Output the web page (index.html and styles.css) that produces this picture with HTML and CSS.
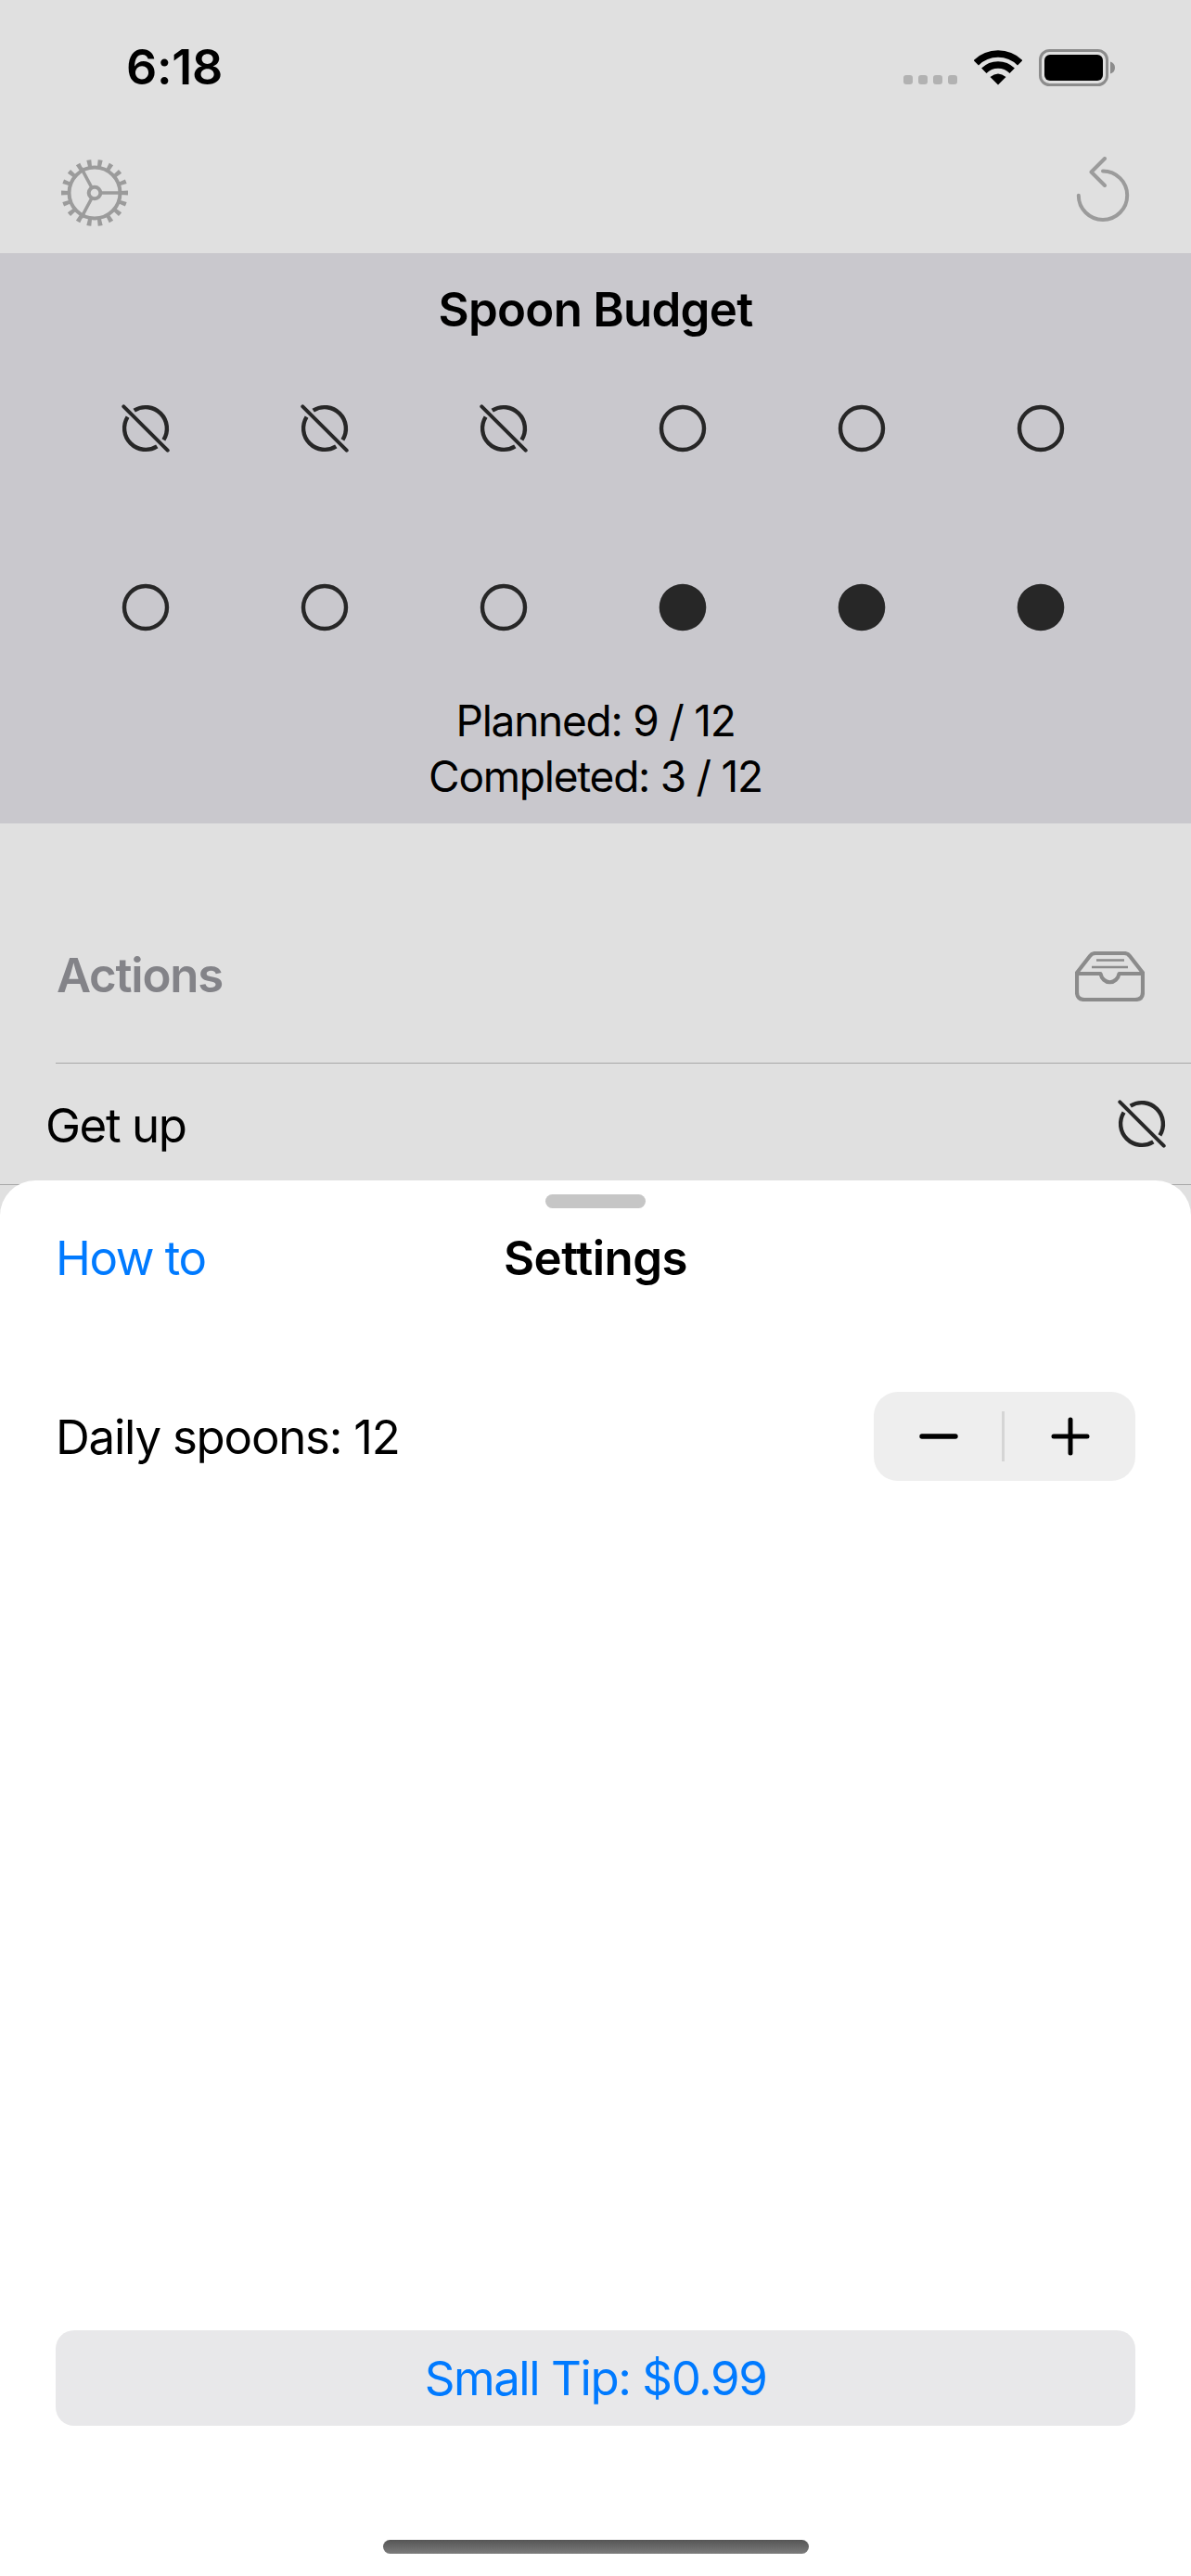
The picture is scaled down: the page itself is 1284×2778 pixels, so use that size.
FILE: index.html
```html
<!DOCTYPE html>
<html>
	<head>
		<title>Spoon Budget</title>
		<meta charset="UTF-8">
		<meta name="viewport" content="width=device-width, initial-scale=1.0">
		<link rel="stylesheet" href="styles.css">
	</head>
	<body>
		<svg class="defs" width="0" height="0">
			<symbol id="spoon-open" viewBox="-26 -26 52 52">
				<circle r="23" fill="none" stroke="#272727" stroke-width="4.4"/>
			</symbol>
			<symbol id="spoon-used" viewBox="-26 -26 52 52">
				<g fill="none" stroke="#272727" stroke-width="4.4">
					<path d="M-12.3 -19.4A23 23 0 0 1 19.4 12.3"/>
					<path d="M-19.4 -12.3A23 23 0 0 0 12.3 19.4"/>
					<path d="M-23.7 -23.7L23.7 23.7" stroke-linecap="round" stroke-width="4"/>
				</g>
			</symbol>
			<symbol id="spoon-done" viewBox="-26 -26 52 52">
				<circle r="25.3" fill="#272727"/>
			</symbol>
		</svg>

		<div class="screen">
			<!-- status bar -->
			<div class="status">
				<span class="time">6:18</span>
				<div class="status-icons">
					<div class="signal"><i></i><i></i><i></i><i></i></div>
					<svg class="wifi" width="52" height="38" viewBox="-26 -37.5 52 38">
						<g fill="none" stroke="#000" stroke-width="7.6">
							<path d="M-23.7 -23.7A33.5 33.5 0 0 1 23.7 -23.7"/>
							<path d="M-15.2 -15.2A21.5 21.5 0 0 1 15.2 -15.2"/>
						</g>
						<path d="M0 0L-8.5 -8.5Q0 -15.5 8.5 -8.5Z"/>
					</svg>
					<svg class="battery" width="82" height="40" viewBox="0 0 82 40">
						<rect x="1.5" y="1.5" width="72" height="37" rx="10" fill="none" stroke="#8c8c8c" stroke-width="3"/>
						<rect x="6" y="6" width="63" height="28" rx="6"/>
						<path d="M77 13.5Q82 15 82 20Q82 25 77 26.5Z" fill="#8c8c8c"/>
					</svg>
				</div>
			</div>

			<!-- toolbar -->
			<div class="toolbar">
				<svg class="gear" width="74" height="74" viewBox="-37 -37 74 74">
					<g fill="none" stroke="#9b9b9b">
						<circle r="27.5" stroke-width="4"/>
						<circle r="32" stroke-width="8" pathLength="180" stroke-dasharray="4 6" stroke-dashoffset="2"/>
						<circle r="6.3" stroke-width="4"/>
						<path d="M6 0H30M-3 -5.5L-14.5 -27M-3 5.5L-14.5 27" stroke-width="3.6"/>
					</g>
				</svg>
				<svg class="undo" width="60" height="70" viewBox="0 0 60 70">
					<g fill="none" stroke="#9b9b9b" stroke-width="4" stroke-linecap="round" stroke-linejoin="round">
						<path d="M30 15.5A26.2 26.2 0 1 1 3.8 41.7"/>
						<path d="M32 2L17.5 16.5L32 31"/>
					</g>
				</svg>
			</div>

			<!-- budget -->
			<section class="budget">
				<h1 class="budget-title">Spoon Budget</h1>
				<div class="spoons">
					<div class="spoon"><svg width="52" height="52"><use href="#spoon-used"/></svg></div>
					<div class="spoon"><svg width="52" height="52"><use href="#spoon-used"/></svg></div>
					<div class="spoon"><svg width="52" height="52"><use href="#spoon-used"/></svg></div>
					<div class="spoon"><svg width="52" height="52"><use href="#spoon-open"/></svg></div>
					<div class="spoon"><svg width="52" height="52"><use href="#spoon-open"/></svg></div>
					<div class="spoon"><svg width="52" height="52"><use href="#spoon-open"/></svg></div>
					<div class="spoon"><svg width="52" height="52"><use href="#spoon-open"/></svg></div>
					<div class="spoon"><svg width="52" height="52"><use href="#spoon-open"/></svg></div>
					<div class="spoon"><svg width="52" height="52"><use href="#spoon-open"/></svg></div>
					<div class="spoon"><svg width="52" height="52"><use href="#spoon-done"/></svg></div>
					<div class="spoon"><svg width="52" height="52"><use href="#spoon-done"/></svg></div>
					<div class="spoon"><svg width="52" height="52"><use href="#spoon-done"/></svg></div>
				</div>
				<p class="budget-line">Planned: 9 / 12</p>
				<p class="budget-line">Completed: 3 / 12</p>
			</section>

			<!-- actions -->
			<div class="actions-head">
				<h2 class="actions-title">Actions</h2>
				<svg class="inbox" width="75" height="54" viewBox="0 0 75 54">
					<g fill="none" stroke="#8b8b8b" stroke-width="4.2" stroke-linejoin="round">
						<path d="M2 23L16 5Q18 2 22 2H53Q57 2 59 5L73 23V44Q73 52 65 52H10Q2 52 2 44Z"/>
						<path d="M2 24H27.5A10.2 11.5 0 0 0 47.5 24H73"/>
						<path d="M23 9.5H53M18 17H57" stroke-width="2.6"/>
					</g>
				</svg>
			</div>
			<div class="action-row">
				<span class="action-name">Get up</span>
				<svg width="52" height="52"><use href="#spoon-used"/></svg>
			</div>

			<!-- settings sheet -->
			<div class="sheet">
				<div class="grabber"></div>
				<div class="sheet-head">
					<a class="how-to">How to</a>
					<span class="sheet-title">Settings</span>
				</div>
				<div class="daily">
					<span>Daily spoons: 12</span>
					<div class="stepper">
						<button class="step">
							<svg width="42" height="6" viewBox="0 0 42 6"><path d="M3 3H39" stroke="#000" stroke-width="5.4" stroke-linecap="round"/></svg>
						</button>
						<span class="step-line"></span>
						<button class="step">
							<svg width="42" height="42" viewBox="0 0 42 42"><path d="M3 21H39M21 3V39" stroke="#000" stroke-width="5" stroke-linecap="round"/></svg>
						</button>
					</div>
				</div>
				<button class="tip">Small Tip: $0.99</button>
				<div class="home-bar"></div>
			</div>
		</div>
	</body>
</html>
```

FILE: styles.css
```css
* {
	margin: 0;
	padding: 0;
	box-sizing: border-box;
}

body {
	width: 1284px;
	height: 2778px;
	overflow: hidden;
	background: #e0e0e0;
	font-family: Inter, "Liberation Sans", sans-serif;
	font-size: 51px;
	letter-spacing: -1.25px;
	color: #000;
}

.defs {
	display: block;
	height: 0;
}

.screen {
	position: relative;
	height: 2778px;
}

/* status bar */
.status {
	height: 142px;
	display: flex;
	justify-content: space-between;
	padding: 43px 82px 0 136px;
}

.time {
	font-size: 52px;
	font-weight: 600;
	line-height: 60px;
	letter-spacing: -0.3px;
}

.status-icons {
	display: flex;
	align-items: flex-start;
	gap: 18px;
	padding-top: 10px;
}

.signal {
	display: flex;
	gap: 6px;
	margin-top: 28px;
}

.signal i {
	width: 10px;
	height: 10px;
	border-radius: 3px;
	background: #b2b2b2;
}

.wifi {
	margin-top: 1px;
}

/* toolbar */
.toolbar {
	height: 131px;
	display: flex;
	justify-content: space-between;
	align-items: center;
	padding: 0 65px 0 65px;
}

.undo {
	margin-bottom: 8px;
}

/* budget */
.budget {
	height: 615px;
	background: #c9c8cd;
}

.budget-title {
	height: 92px;
	padding-top: 31px;
	font-size: 51px;
	line-height: 60px;
	font-weight: 600;
	letter-spacing: -0.75px;
	text-align: center;
}

.spoons {
	display: grid;
	grid-template-columns: repeat(6, 193px);
	grid-auto-rows: 193px;
	padding-left: 60px;
}

.spoon {
	display: flex;
	align-items: center;
	justify-content: center;
}

.budget-line {
	font-size: 46px;
	line-height: 59.5px;
	letter-spacing: -1.25px;
	text-align: center;
}

.budget-line:first-of-type {
	margin-top: -3px;
}

/* actions */
.actions-head {
	height: 259px;
	margin-left: 60px;
	padding: 0 50px 64px 1px;
	display: flex;
	justify-content: space-between;
	align-items: flex-end;
	border-bottom: 1px solid #a8a8a8;
}

.actions-title {
	font-size: 51px;
	line-height: 60px;
	font-weight: 600;
	letter-spacing: -1.25px;
	color: #838388;
}

.inbox {
	margin-bottom: 2px;
}

.action-row {
	height: 131px;
	padding: 2px 27px 0 49px;
	display: flex;
	justify-content: space-between;
	align-items: center;
	border-bottom: 1px solid #a8a8a8;
}

.action-row svg {
	margin-top: -2px;
}

.action-name {
	letter-spacing: -1.45px;
}

/* settings sheet */
.sheet {
	position: absolute;
	left: 0;
	right: 0;
	top: 1273px;
	bottom: 0;
	padding: 0 60px 162px;
	display: flex;
	flex-direction: column;
	background: #fff;
	border-radius: 38px 38px 0 0;
}

.grabber {
	width: 108px;
	height: 15px;
	margin: 15px auto 0;
	border-radius: 8px;
	background: #c6c6c6;
}

.sheet-head {
	position: relative;
	height: 60px;
	margin-top: 24px;
	display: flex;
	justify-content: center;
	line-height: 60px;
}

.how-to {
	position: absolute;
	left: 0;
	top: 0;
	color: #007aff;
	letter-spacing: -1.45px;
}

.sheet-title {
	font-weight: 600;
	letter-spacing: -0.5px;
}

.daily {
	margin-top: 114px;
	display: flex;
	justify-content: space-between;
	align-items: center;
}

.stepper {
	width: 282px;
	height: 96px;
	display: flex;
	align-items: center;
	border-radius: 26px;
	background: #eeeeee;
}

.step {
	flex: 1;
	height: 96px;
	display: flex;
	align-items: center;
	justify-content: center;
	border: none;
	background: none;
}

.step-line {
	width: 3px;
	height: 54px;
	margin-left: -2px;
	margin-right: 2px;
	background: #d5d5d5;
}

.tip {
	margin-top: auto;
	height: 103px;
	border: none;
	border-radius: 20px;
	background: #e8e8ea;
	color: #007aff;
	font-family: inherit;
	font-size: 51px;
	letter-spacing: -1.45px;
}

.home-bar {
	position: absolute;
	left: 413px;
	top: 1466px;
	width: 459px;
	height: 15px;
	border-radius: 8px;
	background: linear-gradient(#555555, #7c7c7c);
}
```
